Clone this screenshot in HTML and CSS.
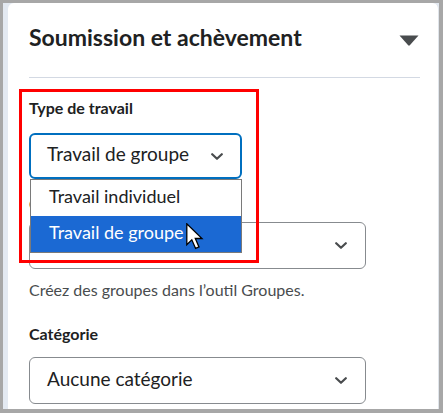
FILE: index.html
```html
<!DOCTYPE html>
<html lang="fr">
<head>
<meta charset="utf-8">
<title>Soumission et achèvement</title>
<link rel="stylesheet" href="styles.css">
</head>
<body>
<div class="frame">
  <div class="rail">
    <section class="card">
      <div class="card-head">
        <h2 class="card-title">Soumission et achèvement</h2>
        <svg class="caret" width="20" height="11" viewBox="0 0 20 11" aria-hidden="true">
          <path d="M0.5 0.5 H19.5 L10.8 10.3 Q10 11 9.2 10.3 Z" fill="#494c4e"/>
        </svg>
      </div>
      <hr class="divider">

      <div class="label label-first">Type de travail</div>
      <div class="select select-focus select-short">
        <span class="select-text">Travail de groupe</span>
        <svg class="chev" width="12" height="7" viewBox="0 0 12 7" aria-hidden="true"><path d="M1.2 1.2 L6 5.8 L10.8 1.2" fill="none" stroke="#494c4e" stroke-width="2.2" stroke-linecap="round" stroke-linejoin="round"/></svg>
      </div>

      <div class="label label-hidden">Catégorie de groupes</div>
      <div class="select select-wide select-second">
        <span class="select-text"></span>
        <svg class="chev" width="12" height="7" viewBox="0 0 12 7" aria-hidden="true"><path d="M1.2 1.2 L6 5.8 L10.8 1.2" fill="none" stroke="#494c4e" stroke-width="2.2" stroke-linecap="round" stroke-linejoin="round"/></svg>
      </div>
      <p class="help">Créez des groupes dans l’outil Groupes.</p>

      <div class="label label-cat">Catégorie</div>
      <div class="select select-wide select-third">
        <span class="select-text">Aucune catégorie</span>
        <svg class="chev" width="12" height="7" viewBox="0 0 12 7" aria-hidden="true"><path d="M1.2 1.2 L6 5.8 L10.8 1.2" fill="none" stroke="#494c4e" stroke-width="2.2" stroke-linecap="round" stroke-linejoin="round"/></svg>
      </div>
    </section>
  </div>
</div>

<ul class="options">
  <li class="option">Travail individuel</li>
  <li class="option option-active">Travail de groupe</li>
</ul>

<div class="highlight-box"></div>

<svg class="cursor" width="18" height="27" viewBox="0 0 18 27" aria-hidden="true">
  <path d="M0.8 0.8 V21.6 L5.8 16.8 L9.6 25.4 L13 23.9 L9.3 15.5 H16 Z" fill="#ffffff" stroke="#000000" stroke-width="1.3" stroke-linejoin="miter"/>
</svg>
</body>
</html>
```

FILE: styles.css
```css
html, body {
  margin: 0;
  padding: 0;
}

body {
  position: relative;
  width: 443px;
  height: 413px;
  overflow: hidden;
  font-family: Lato, "Noto Sans", "Liberation Sans", sans-serif;
  color: #202122;
}

.frame {
  box-sizing: border-box;
  width: 443px;
  height: 413px;
  background: #a7a7a7;
  padding: 3px 4px 4px 3px;
  display: flex;
}

.rail {
  flex: 1;
  display: flex;
  background: #e3e9f1;
  padding-left: 5px;
}

.card {
  flex: 1;
  background: #ffffff;
  border-radius: 6px 6px 0 0;
  border-right: 1px solid #dfe4ea;
  padding: 19px 18px 0 21px;
  overflow: hidden;
}

.card-head {
  display: flex;
  justify-content: space-between;
  align-items: flex-start;
}

.card-title {
  margin: 0;
  font-size: 23px;
  line-height: 30px;
  font-weight: 700;
  color: #202122;
}

.caret {
  margin-top: 13px;
  margin-right: 1px;
  display: block;
}

.divider {
  border: 0;
  height: 1px;
  background: #d3d9e3;
  margin: 25px 0 0 0;
}

.label {
  font-size: 16px;
  line-height: 20px;
  font-weight: 700;
  color: #202122;
}

.label-first { margin-top: 20px; }
.label-hidden { margin-top: 15px; }
.label-cat { margin-top: 23.5px; }

.select {
  box-sizing: border-box;
  display: flex;
  align-items: center;
  justify-content: space-between;
  border: 1px solid #878b8f;
  border-radius: 6px;
  height: 47px;
  padding: 0 18px 0 17px;
  background: #ffffff;
}

.select-focus {
  border: 2px solid #006fbf;
  height: 46px;
  padding: 0 17px 0 16px;
  margin-top: 15px;
}

.select-short { width: 213px; }
.select-wide { width: 337px; }
.select-second { margin-top: 8px; }
.select-third { margin-top: 13.5px; }

.select-text {
  font-size: 19px;
  line-height: 24px;
  padding-bottom: 4px;
  color: #202122;
}

.chev {
  display: block;
  flex: none;
}

.help {
  margin: 11px 0 0 0;
  font-size: 16px;
  line-height: 20px;
  color: #494c4e;
}

.options {
  position: absolute;
  left: 30px;
  top: 179px;
  box-sizing: border-box;
  width: 212px;
  margin: 0;
  padding: 0;
  list-style: none;
  background: #ffffff;
  border: 1px solid #7a7a7a;
}

.option {
  height: 36px;
  box-sizing: border-box;
  padding: 0 0 4px 18px;
  font-size: 18px;
  line-height: 32px;
  color: #202122;
}

.option-active {
  background: #1b69d3;
  color: #ffffff;
}

.highlight-box {
  position: absolute;
  left: 19px;
  top: 89px;
  width: 240px;
  height: 174px;
  box-sizing: border-box;
  border: 3px solid #ff0000;
}

.cursor {
  position: absolute;
  left: 186px;
  top: 223px;
  display: block;
}
```
